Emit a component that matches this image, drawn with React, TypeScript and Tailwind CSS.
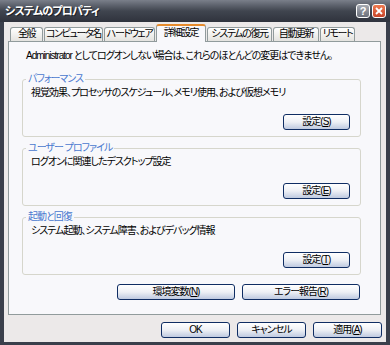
import React from "react";

const tabs = [
  { label: "全般", w: "w-[33px]" },
  { label: "コンピュータ名", w: "w-[59px]" },
  { label: "ハードウェア", w: "w-[51px]" },
  { label: "詳細設定", w: "w-[50px]", active: true },
  { label: "システムの復元", w: "w-[65px]" },
  { label: "自動更新", w: "w-[46px]" },
  { label: "リモート", w: "w-[35px]" },
];

const groups = [
  { title: "パフォーマンス", text: "視覚効果、プロセッサのスケジュール、メモリ使用、および仮想メモリ", key: "S" },
  { title: "ユーザー プロファイル", text: "ログオンに関連したデスクトップ設定", key: "E" },
  { title: "起動と回復", text: "システム起動、システム障害、およびデバッグ情報", key: "T" },
];

// text in this dialog is small and tight, like MS UI Gothic
const txt = "text-[10px] leading-[12px] tracking-[-1px] whitespace-nowrap";
const tabTxt = "text-[10px] leading-[12px] tracking-[-1.4px] whitespace-nowrap";

const XpButton = ({ className = "", children }: { className?: string; children: React.ReactNode }) => (
  <button className={`h-[16px] rounded-[3px] border border-[#0f2d63] bg-gradient-to-b from-[#ffffff] via-[#eef0f5] to-[#bfcae0] text-black flex items-center justify-center ${txt} ${className}`}>
    {children}
  </button>
);

const Mnemonic = ({ k }: { k: string }) => (
  <span>
    (<span className="underline underline-offset-1">{k}</span>)
  </span>
);

export default function App() {
  return (
    <div className="w-[390px] h-[345px] flex flex-col bg-[#3a3f4b] [font-family:'Liberation_Sans','Noto_Sans_CJK_JP',sans-serif] [font-feature-settings:'palt']">
      {/* title bar */}
      <div className="h-[22px] flex items-center pl-[5px] pr-[4px] bg-gradient-to-b from-[#7a7f8a] via-[#40454f] to-[#2f333d]">
        <span className="text-white font-bold text-[11px] leading-[14px] tracking-[-0.8px] [text-shadow:1px_1px_0_#1c1f26]">
          システムのプロパティ
        </span>
        <div className="ml-auto flex gap-[2px]">
          <div className="w-[14px] h-[14px] rounded-[3px] border border-white bg-gradient-to-b from-[#a7abb3] to-[#6b707b] flex items-center justify-center text-white text-[11px] font-bold leading-none">
            ?
          </div>
          <div className="w-[14px] h-[14px] rounded-[3px] border border-white bg-gradient-to-b from-[#ef7a50] to-[#c7452a] flex items-center justify-center">
            <svg width="8" height="8" viewBox="0 0 8 8">
              <path d="M1 1L7 7M7 1L1 7" stroke="white" strokeWidth="1.8" />
            </svg>
          </div>
        </div>
      </div>

      {/* body */}
      <div className="flex-1 mx-[4px] mb-[3px] bg-[#ece9e9] flex flex-col pt-[2px] pb-[4px]">
        <div className="h-[17px] flex items-end gap-[1px] pl-[6px] relative z-10">
          {tabs.map((t) =>
            t.active ? (
              <div
                key={t.label}
                className={`${t.w} h-[18px] -mb-px border border-b-0 border-[#919b9c] border-t-[#e68b2c] border-t-2 rounded-t-[3px] bg-[#f8f8fb] flex justify-center pt-[1px] ${tabTxt}`}
              >
                {t.label}
              </div>
            ) : (
              <div
                key={t.label}
                className={`${t.w} h-[14px] border border-b-0 border-[#919b9c] rounded-t-[3px] bg-gradient-to-b from-[#ffffff] to-[#e4e3df] flex justify-center ${tabTxt}`}
              >
                {t.label}
              </div>
            )
          )}
        </div>

        <div className="ml-[4px] w-[373px] h-[274px] border border-[#919b9c] bg-[#f8f8fb] flex flex-col">
          <p className={`pl-[17px] pt-[8px] text-black ${txt}`}>
            Administrator としてログオンしない場合は、これらのほとんどの変更はできません。
          </p>

          {groups.map((g, i) => (
            <fieldset
              key={g.title}
              className={`ml-[13px] w-[339px] border border-[#d6d6cc] rounded-[3px] pl-[8px] pr-[10px] pt-[2px] pb-[6px] ${i === 0 ? "mt-[11px]" : "mt-[5px]"}`}
            >
              <legend className={`ml-[-5px] px-[2px] text-[#4a78cf] ${txt}`}>{g.title}</legend>
              <p className={`text-black ${txt}`}>{g.text}</p>
              <div className="flex justify-end mt-[15px]">
                <XpButton className="w-[67px]">
                  設定<Mnemonic k={g.key} />
                </XpButton>
              </div>
            </fieldset>
          ))}

          <div className="flex justify-end gap-[7px] pr-[20px] mt-[9px]">
            <XpButton className="w-[118px]">
              環境変数<Mnemonic k="N" />
            </XpButton>
            <XpButton className="w-[118px]">
              エラー報告<Mnemonic k="R" />
            </XpButton>
          </div>
        </div>

        <div className="mt-[7px] flex justify-end gap-[7px] pr-[4px]">
          <XpButton className="w-[69px]">OK</XpButton>
          <XpButton className="w-[69px]">キャンセル</XpButton>
          <XpButton className="w-[69px]">
            適用<Mnemonic k="A" />
          </XpButton>
        </div>
      </div>
    </div>
  );
}
